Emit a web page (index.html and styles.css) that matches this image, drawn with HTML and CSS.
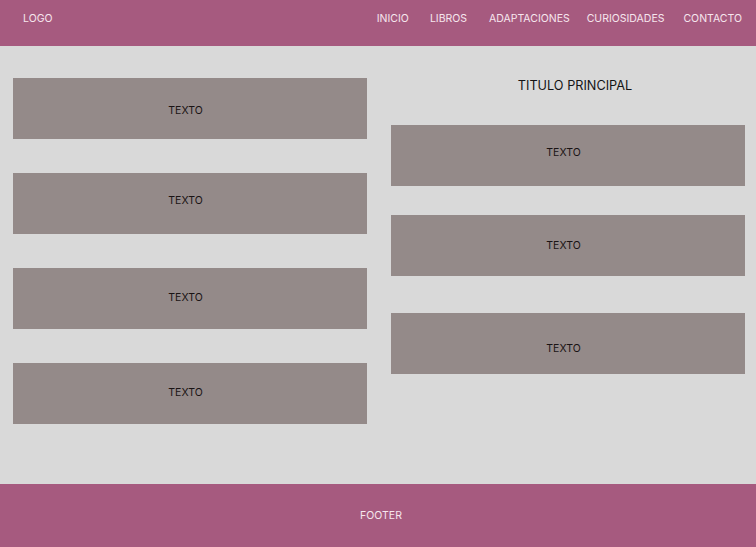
FILE: index.html
```html
<!DOCTYPE html>
<html lang="es">
<head>
<meta charset="utf-8">
<title>Maqueta</title>
<link rel="stylesheet" href="styles.css">
</head>
<body>
<header class="header">
  <div class="logo">LOGO</div>
  <nav class="nav">
    <a class="nav-link">INICIO</a>
    <a class="nav-link nav-wide">LIBROS</a>
    <a class="nav-link nav-wider">ADAPTACIONES</a>
    <a class="nav-link nav-tight">CURIOSIDADES</a>
    <a class="nav-link nav-last">CONTACTO</a>
  </nav>
</header>
<main class="main">
  <section class="col col-left">
    <div class="box box-l1">TEXTO</div>
    <div class="box box-l2">TEXTO</div>
    <div class="box box-l3">TEXTO</div>
    <div class="box box-l4">TEXTO</div>
  </section>
  <section class="col col-right">
    <h1 class="title">TITULO PRINCIPAL</h1>
    <div class="box box-r1">TEXTO</div>
    <div class="box box-r2">TEXTO</div>
    <div class="box box-r3">TEXTO</div>
  </section>
</main>
<footer class="footer">FOOTER</footer>
</body>
</html>
```
FILE: styles.css
```css
* { box-sizing: border-box; }
html, body { margin: 0; padding: 0; }
body {
  font-family: Inter, "Noto Sans", sans-serif;
  background: #d9d9d9;
  width: 756px;
  height: 547px;
  display: flex;
  flex-direction: column;
}
.header {
  height: 46px;
  background: #a65a7f;
  display: flex;
  align-items: center;
  justify-content: space-between;
  padding: 0 14px 10px 23px;
  color: #f6e6ee;
  font-size: 10.5px;
  flex: none;
}
.nav {
  display: flex;
  gap: 20px;
}
.nav-link { color: #f6e6ee; }
.nav-wide { margin-left: 1px; }
.nav-wider { margin-left: 2px; }
.nav-tight { margin-left: -3px; }
.nav-last { margin-left: -1px; }
.main {
  flex: 1;
  display: flex;
  gap: 24px;
  padding: 0 11px 0 13px;
}
.col {
  flex: 1;
  display: flex;
  flex-direction: column;
}
.col-left {
  padding-top: 32px;
  gap: 34px;
}
.box {
  height: 61px;
  background: #948a89;
  display: flex;
  align-items: center;
  justify-content: center;
  font-size: 10.5px;
  color: #1a1414;
  flex: none;
  padding-right: 9px;
}
.box-l1 { padding-top: 4px; }
.box-l2 { padding-bottom: 6px; }
.box-l3 { padding-bottom: 2px; }
.box-l4 { padding-bottom: 2px; }
.title {
  margin: 31px 0 0;
  height: 18px;
  line-height: 18px;
  font-size: 12.7px;
  font-weight: 400;
  text-align: center;
  color: #141414;
  padding-left: 14px;
}
.box-r1 { margin-top: 30px; padding-bottom: 6px; }
.box-r2 { margin-top: 29px; }
.box-r3 { margin-top: 37px; padding-top: 10px; }
.footer {
  height: 63px;
  background: #a65a7f;
  color: #f6e6ee;
  font-size: 10.5px;
  display: flex;
  align-items: center;
  justify-content: center;
  padding-left: 6px;
  flex: none;
}
```
